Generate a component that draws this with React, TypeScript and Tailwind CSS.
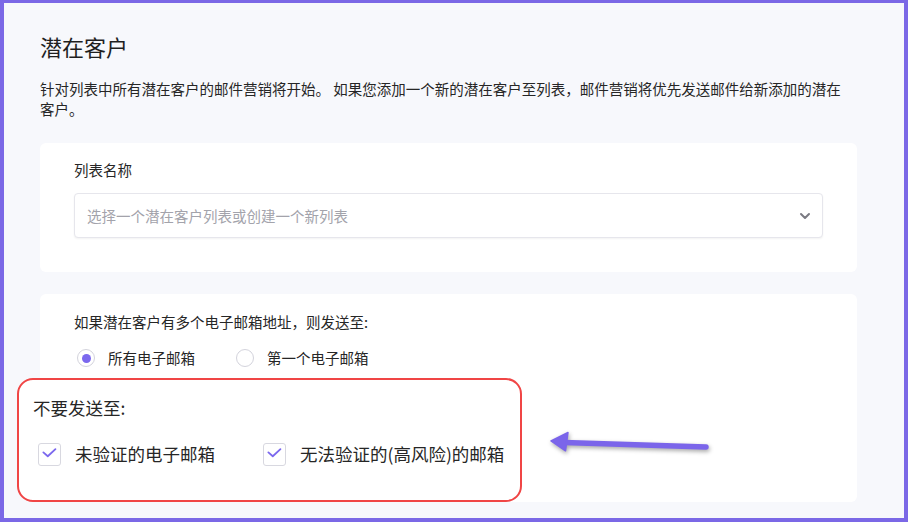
import React from 'react'

function Radio({ checked, label }: { checked?: boolean; label: string }) {
  return (
    <label className="flex items-center">
      <span className="flex h-[18px] w-[18px] items-center justify-center rounded-full border border-[#d3d3dc] bg-white">
        {checked && <span className="h-[9px] w-[9px] rounded-full bg-[#7b68ee]" />}
      </span>
      <span className="ml-[13px] text-[14.5px] leading-[20px] text-[#262626]">{label}</span>
    </label>
  )
}

function Check({ label }: { label: string }) {
  return (
    <label className="flex items-center">
      <span className="flex h-[23px] w-[23px] items-center justify-center rounded-[3px] border border-[#d8d8e0] bg-white">
        <svg width="23" height="23" viewBox="0 0 23 23" fill="none">
          <path d="M4.8 9.2 L9.6 13.4 L18 5.6" stroke="#7b68ee" strokeWidth="2" strokeLinecap="round" strokeLinejoin="round" />
        </svg>
      </span>
      <span className="ml-[14px] text-[17.5px] leading-[24px] text-[#262626]">{label}</span>
    </label>
  )
}

export default function App() {
  return (
    <div className="h-[522px] w-[908px] bg-[#7b68e6] px-[4px] pt-[3px] pb-[4px] font-['Noto_Sans_CJK_SC','Noto_Sans',sans-serif]">
      <div className="relative h-full bg-[#f7f8fc] pl-[36px] pr-[47px] pt-[28px]">
        <h1 className="text-[22px] font-normal leading-[30px] text-[#1f1f1f]">潜在客户</h1>
        <p className="mt-[18px] max-w-[810px] text-[14.5px] leading-[20px] text-[#262626]">
          针对列表中所有潜在客户的邮件营销将开始。 如果您添加一个新的潜在客户至列表，邮件营销将优先发送邮件给新添加的潜在客户。
        </p>

        <div className="mt-[24px] h-[129px] rounded-[6px] bg-white px-[34px] pt-[17px]">
          <div className="text-[14.5px] leading-[20px] text-[#262626]">列表名称</div>
          <div className="mt-[13px] flex h-[45px] items-center justify-between rounded-[4px] border border-[#e6e6ec] bg-white pl-[12px] pr-[11px] shadow-[0_1px_2px_rgba(0,0,0,0.05)]">
            <span className="text-[14.5px] text-[#a3a3ab]">选择一个潜在客户列表或创建一个新列表</span>
            <svg width="12" height="8" viewBox="0 0 12 8" fill="none">
              <path d="M2 2 L6 6 L10 2" stroke="#7a7a82" strokeWidth="2" strokeLinecap="round" strokeLinejoin="round" />
            </svg>
          </div>
        </div>

        <div className="mt-[22px] h-[208px] rounded-[6px] bg-white px-[34px] pt-[18px]">
          <div className="text-[14.5px] leading-[20px] text-[#262626]">如果潜在客户有多个电子邮箱地址，则发送至:</div>
          <div className="mt-[16px] flex items-center gap-[41px] pl-[3px]">
            <Radio checked label="所有电子邮箱" />
            <Radio label="第一个电子邮箱" />
          </div>
        </div>

        {/* callout */}
        <div className="absolute left-[13px] top-[375px] h-[124px] w-[505px] rounded-[16px] border-2 border-[#f04545] bg-white pl-[14px] pt-[16px]">
          <div className="text-[17.5px] leading-[24px] text-[#262626]">不要发送至:</div>
          <div className="mt-[22px] flex items-center gap-[48px] pl-[5px]">
            <Check label="未验证的电子邮箱" />
            <Check label="无法验证的(高风险)的邮箱" />
          </div>
        </div>

        <svg className="absolute left-[541px] top-[422px] drop-shadow-[1px_2px_2px_rgba(0,0,0,0.35)]" width="172" height="36" viewBox="0 0 172 36" fill="none">
          <path d="M19 17.6 L161 22" stroke="#7b65ea" strokeWidth="5.5" strokeLinecap="round" />
          <path d="M6 16 L23 7.5 L20.5 25.8 Z" fill="#7b65ea" stroke="#7b65ea" strokeWidth="1.5" strokeLinejoin="round" />
        </svg>
      </div>
    </div>
  )
}
